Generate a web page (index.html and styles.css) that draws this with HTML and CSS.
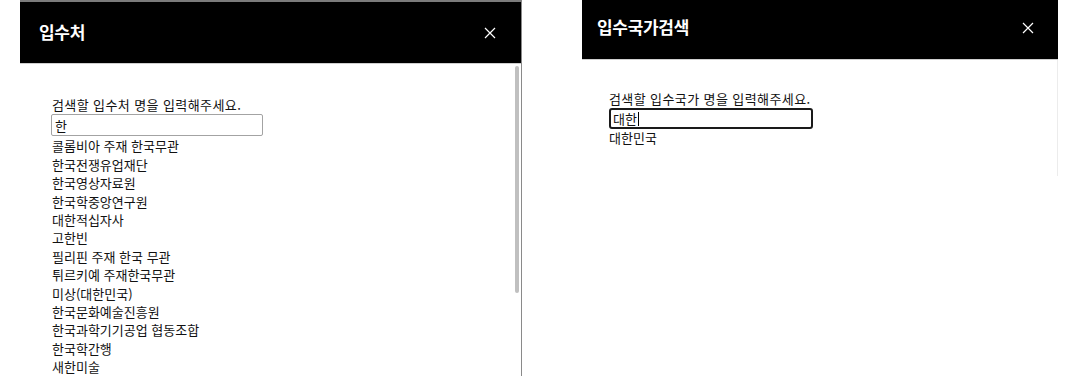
FILE: index.html
```html
<!DOCTYPE html>
<html lang="ko">
<head>
<meta charset="UTF-8">
<title>입수처 / 입수국가 검색</title>
<link rel="stylesheet" href="styles.css">
</head>
<body>
<div class="wrap">
    <!-- 입수처 검색 팝업 -->
    <div class="pop pop-source">
        <div class="pop-head">
            <h2>입수처</h2>
            <span class="close">
                <svg width="12" height="12" viewBox="0 0 12 12"><path d="M1 1L11 11M11 1L1 11" stroke="#fff" stroke-width="1.2" fill="none"/></svg>
            </span>
        </div>
        <div class="pop-body">
            <p class="guide">검색할 입수처 명을 입력해주세요.</p>
            <input class="field" type="text" value="한">
            <ul class="result">
                <li>콜롬비아 주재 한국무관</li>
                <li>한국전쟁유업재단</li>
                <li>한국영상자료원</li>
                <li>한국학중앙연구원</li>
                <li>대한적십자사</li>
                <li>고한빈</li>
                <li>필리핀 주재 한국 무관</li>
                <li>튀르키예 주재한국무관</li>
                <li>미상(대한민국)</li>
                <li>한국문화예술진흥원</li>
                <li>한국과학기기공업 협동조합</li>
                <li>한국학간행</li>
                <li>새한미술</li>
            </ul>
            <!-- 스크롤바 -->
            <span class="scroll-thumb"></span>
        </div>
    </div>

    <!-- 입수국가 검색 팝업 -->
    <div class="pop pop-country">
        <div class="pop-head">
            <h2>입수국가검색</h2>
            <span class="close">
                <svg width="12" height="12" viewBox="0 0 12 12"><path d="M1 1L11 11M11 1L1 11" stroke="#fff" stroke-width="1.2" fill="none"/></svg>
            </span>
        </div>
        <div class="pop-body">
            <p class="guide">검색할 입수국가 명을 입력해주세요.</p>
            <div class="field focus">대한<span class="caret"></span></div>
            <ul class="result">
                <li>대한민국</li>
            </ul>
        </div>
    </div>
</div>
</body>
</html>
```

FILE: styles.css
```css
* {
	margin: 0;
	padding: 0;
	box-sizing: border-box;
}
body {
	background: #fff;
	color: #111;
	font-family: "Noto Sans CJK KR", "Noto Sans", sans-serif;
	font-size: 13px;
	line-height: 18.4px;
	overflow: hidden;
}
ul {
	list-style: none;
}
.wrap {
	display: flex;
	align-items: flex-start;
}

/* 팝업 공통 */
.pop {
	background: #fff;
}
.pop-head {
	display: flex;
	align-items: center;
	justify-content: space-between;
	background: #000;
	color: #fff;
	border-bottom: 1px solid #cfcfcf;
}
.pop-head h2 {
	font-size: 17px;
	font-weight: bold;
	letter-spacing: -0.3px;
}
.close {
	display: flex;
	width: 12px;
	height: 12px;
}
.guide {
	white-space: nowrap;
	letter-spacing: 0.4px;
}
.field {
	display: block;
	font-family: inherit;
	font-size: 13px;
	color: #111;
	background: #fff;
	outline: none;
}

/* 입수처 */
.pop-source {
	margin-left: 20px;
	width: 502px;
	border-top: 2px solid #7b7b7b;
	border-right: 1px solid #8a8a8a;
}
.pop-source .pop-head {
	height: 62px;
	padding: 0 25px 0 19px;
}
.pop-source .close {
	margin-top: 1px;
}
.pop-source .pop-body {
	position: relative;
	height: 312px;
	padding: 32px 0 0 32px;
	overflow: hidden;
}
.pop-source .field {
	width: 212px;
	height: 22px;
	margin-left: -1px;
	padding: 0 3px;
	border: 1px solid #a3a3a3;
	border-radius: 2px;
	line-height: 20px;
}
.pop-source .result {
	margin-top: 1px;
}
.scroll-thumb {
	position: absolute;
	top: 2px;
	right: 2px;
	width: 4px;
	height: 227px;
	border-radius: 2px;
	background: #c0c0c0;
}

/* 입수국가 */
.pop-country {
	margin-left: 60px;
	width: 476px;
}
.pop-country .pop-head {
	height: 60px;
	padding: 0 24px 0 15px;
}
.pop-country .close {
	margin-top: -3px;
}
.pop-country .pop-head h2 {
	margin-top: -4px;
}
.pop-country .pop-body {
	height: 116px;
	padding: 30px 0 0 27px;
	border-right: 1px solid #ececec;
}
.pop-country .field {
	width: 204px;
	height: 21px;
	padding: 0 2px;
	border: 2px solid #1a1a1a;
	border-radius: 3px;
	line-height: 17px;
}
.caret {
	display: inline-block;
	width: 1px;
	height: 14px;
	margin-left: 1px;
	vertical-align: -2px;
	background: #000;
}
```
